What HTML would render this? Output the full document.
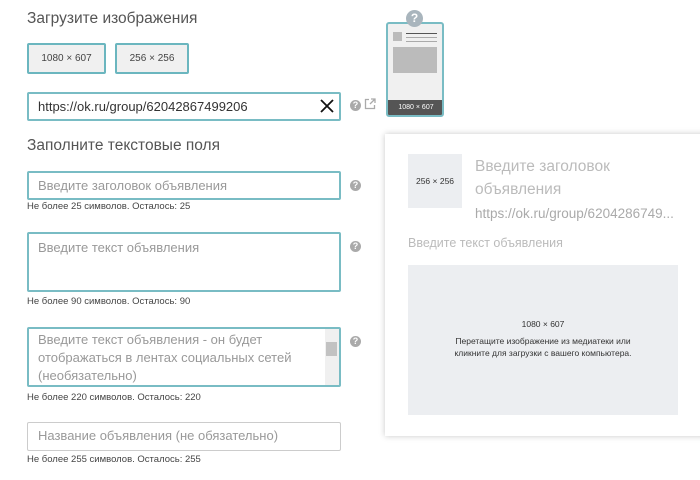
<!DOCTYPE html>
<html><head><meta charset="utf-8"><style>
*{box-sizing:border-box;margin:0;padding:0}
body{width:700px;height:480px;background:#fff;font-family:"Liberation Sans","DejaVu Sans",sans-serif;position:relative;overflow:hidden;color:#555}
.a{position:absolute}
.h{font-size:15.5px;color:#555}
.btn{border:2px solid #6bb6bf;background:#f0f0f0;border-radius:2px;font-size:10px;color:#444;text-align:center;line-height:28px}
.inp{border:2px solid #79bcc4;border-radius:2px;background:#fff;font-size:13px;color:#999;padding-left:9px}
.hint{font-size:9.5px;color:#444;left:27px}
.q{width:11px;height:11px;border-radius:50%;background:#aaa;color:#fff;font-size:9px;font-weight:bold;text-align:center;line-height:11px}
</style></head><body>
<div class="a h" style="left:27px;top:10px">Загрузите изображения</div>
<div class="a btn" style="left:27px;top:43px;width:79px;height:31px">1080 × 607</div>
<div class="a btn" style="left:115px;top:43px;width:74px;height:31px">256 × 256</div>
<div class="a inp" style="left:27px;top:92px;width:314px;height:29px;line-height:25px;color:#333">https://ok.ru/group/62042867499206</div>
<svg class="a" style="left:320px;top:99px" width="14" height="14"><path d="M1 1L13 13M13 1L1 13" stroke="#111" stroke-width="1.8"/></svg>
<div class="a q" style="left:350px;top:100px">?</div>
<svg class="a" style="left:364px;top:98px" width="12" height="12"><path d="M5 1.5H1.5V10.5H10.5V7" fill="none" stroke="#aaa" stroke-width="1.3"/><path d="M7 1H11V5M11 1L6 6" fill="none" stroke="#aaa" stroke-width="1.3"/></svg>
<div class="a" style="left:386px;top:22px;width:58px;height:95px;border:2px solid #79bcc4;border-radius:3px;background:#f0f0f0;overflow:hidden">
<div class="a" style="left:5px;top:8px;width:9px;height:9px;background:#bbb"></div>
<div class="a" style="left:18px;top:9px;width:31px;height:1px;background:#555"></div>
<div class="a" style="left:18px;top:13px;width:31px;height:1px;background:#aaa"></div>
<div class="a" style="left:18px;top:17px;width:31px;height:1px;background:#aaa"></div>
<div class="a" style="left:5px;top:23px;width:44px;height:26px;background:#bbb"></div>
<div class="a" style="left:0;bottom:0;width:56px;height:15px;background:#555;color:#fff;font-size:7px;text-align:center;line-height:15px">1080 × 607</div>
</div>
<div class="a" style="left:406px;top:10px;width:17px;height:17px;border-radius:50%;background:#a9b5bd;color:#fff;font-size:12px;font-weight:bold;text-align:center;line-height:17px">?</div>
<div class="a h" style="left:27px;top:137px">Заполните текстовые поля</div>
<div class="a inp" style="left:27px;top:171px;width:314px;height:29px;line-height:25px">Введите заголовок объявления</div>
<div class="a q" style="left:350px;top:180px">?</div>
<div class="a hint" style="top:201px">Не более 25 символов. Осталось: 25</div>
<div class="a inp" style="left:27px;top:232px;width:314px;height:60px;padding-top:5px;line-height:17px">Введите текст объявления</div>
<div class="a q" style="left:350px;top:241px">?</div>
<div class="a hint" style="top:296px">Не более 90 символов. Осталось: 90</div>
<div class="a inp" style="left:27px;top:327px;width:314px;height:60px;padding-top:2px;line-height:18px;padding-right:20px">Введите текст объявления - он будет отображаться в лентах социальных сетей (необязательно)</div>
<div class="a" style="left:325px;top:329px;width:14px;height:56px;background:#f0f0f0"></div>
<div class="a" style="left:326px;top:342px;width:11px;height:14px;background:#c2c2c2"></div>
<div class="a q" style="left:350px;top:336px">?</div>
<div class="a hint" style="top:392px">Не более 220 символов. Осталось: 220</div>
<div class="a inp" style="left:27px;top:422px;width:314px;height:29px;line-height:25px;border:1px solid #ccc;padding-left:10px">Название объявления (не обязательно)</div>
<div class="a hint" style="top:454px">Не более 255 символов. Осталось: 255</div>
<div class="a" style="left:385px;top:134px;width:330px;height:302px;background:#fff;box-shadow:0 0 6px rgba(0,0,0,.22)"></div>
<div class="a" style="left:408px;top:154px;width:54px;height:54px;background:#eceef1;font-size:8.5px;color:#333;text-align:center;line-height:54px">256 × 256</div>
<div class="a" style="left:475px;top:155px;font-size:15.5px;color:#bbb;line-height:23px">Введите заголовок<br>объявления</div>
<div class="a" style="left:475px;top:206px;font-size:13.5px;color:#aaa">https://ok.ru/group/6204286749...</div>
<div class="a" style="left:408px;top:236px;font-size:12.5px;color:#bbb">Введите текст объявления</div>
<div class="a" style="left:408px;top:265px;width:270px;height:150px;background:#eceef1;text-align:center;font-size:8.5px;color:#333">
<div style="margin-top:54px">1080 × 607</div>
<div style="margin-top:6px;line-height:12px">Перетащите изображение из медиатеки или<br>кликните для загрузки с вашего компьютера.</div>
</div>
</body></html>
